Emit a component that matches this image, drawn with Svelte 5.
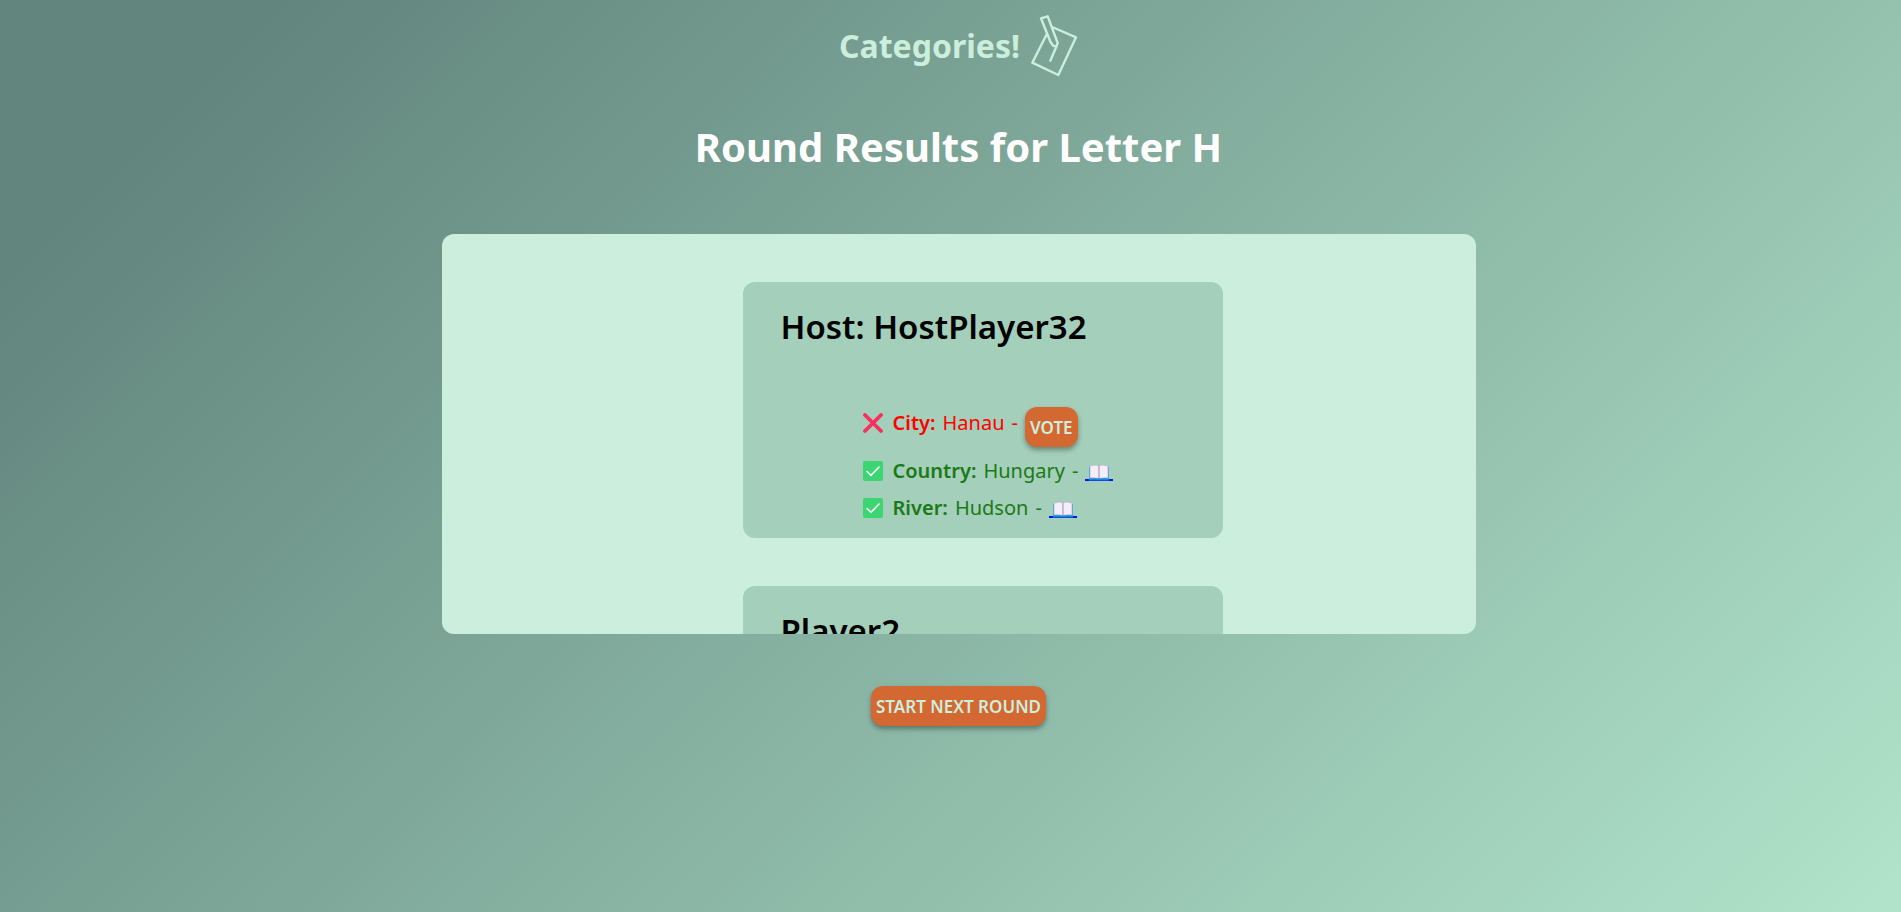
<script>
  const players = [
    {
      name: 'Host: HostPlayer32',
      answers: [
        { category: 'City', word: 'Hanau', valid: false },
        { category: 'Country', word: 'Hungary', valid: true },
        { category: 'River', word: 'Hudson', valid: true }
      ]
    },
    { name: 'Player2', answers: [] }
  ];
</script>

<div class="page">
  <header>
    <span class="brand">Categories!</span>
    <svg width="48" height="66" viewBox="0 0 48 66" fill="none" stroke="#cbeedd" stroke-width="2.4" stroke-linejoin="round" stroke-linecap="round" aria-hidden="true">
      <path d="M17 20.700 L2.300 49.700 L28.300 62 L46 24.300 L23.300 14.500" />
      <path d="M11 5.300 L17.700 3.300 L27.700 30 L26.300 33.700 L23 32.700 L20.300 28.500 Z" />
      <path d="M26.300 33.700 L20.300 47.700" />
    </svg>
  </header>

  <main>
    <h1>Round Results for Letter H</h1>

    <section class="results">
      {#each players as player}
        <article class="card">
          <h2>{player.name}</h2>
          <ul>
            {#each player.answers as answer}
              <li class:valid={answer.valid}>
                {#if answer.valid}
                  <svg class="mark" viewBox="0 0 20 20" role="img" aria-label="Valid">
                    <rect width="20" height="20" rx="2" fill="#3bd671" />
                    <path d="M4 10.500 L8 14.300 L16 6" fill="none" stroke="#fff" stroke-width="1.600" stroke-linecap="round" />
                  </svg>
                {:else}
                  <svg class="mark" viewBox="0 0 20 20" role="img" aria-label="Invalid">
                    <path d="M2 2 L18 18 M18 2 L2 18" fill="none" stroke="#f92f60" stroke-width="3.800" stroke-linecap="round" />
                  </svg>
                {/if}
                <span class="answer"><strong>{answer.category}:</strong> <span>{answer.word}</span> <span>-</span></span>
                {#if answer.valid}
                  <a href="#{answer.word}" aria-label="Read about {answer.word}">
                    <svg width="28" height="18" viewBox="0 0 28 18" aria-hidden="true">
                      <path d="M4 3 H24 V16 H4 Z" fill="#3fa9ea" />
                      <path d="M5 2 Q9.500 0.500 14 1.500 V14.500 Q9.500 13.500 5 14 Z" fill="#f3eef8" stroke="#b5a6c6" stroke-width="0.600" />
                      <path d="M23 2 Q18.500 0.500 14 1.500 V14.500 Q18.500 13.500 23 14 Z" fill="#f3eef8" stroke="#b5a6c6" stroke-width="0.600" />
                      <path d="M14 2 V14" stroke="#b5a6c6" stroke-width="1" />
                      <path d="M0 16 H28" stroke="#0018ee" stroke-width="2" />
                      <path d="M4 15.500 H24" stroke="#1686d9" stroke-width="2" />
                    </svg>
                  </a>
                {:else}
                  <button type="button">VOTE</button>
                {/if}
              </li>
            {/each}
          </ul>
        </article>
      {/each}
    </section>

    <button type="button">START NEXT ROUND</button>
  </main>
</div>

<style>
  :global(body) {
    margin: 0;
  }

  .page {
    box-sizing: border-box;
    min-height: 100vh;
    padding: 13px 16px 48px 32px;
    background: linear-gradient(135deg, #62857d 10%, #b1e4cb 100%);
    font-family: 'Noto Sans', sans-serif;
    font-size: 20px;
    line-height: 28px;
  }

  header {
    display: flex;
    align-items: center;
    justify-content: center;
    gap: 10px;
    color: #cbeedd;
  }

  .brand {
    font-size: 32px;
    line-height: 48px;
    font-weight: 700;
  }

  main {
    display: flex;
    flex-direction: column;
    align-items: center;
  }

  h1 {
    margin: 38px 0 57px;
    color: #fff;
    font-size: 40px;
    line-height: 60px;
    font-weight: 700;
  }

  .results {
    box-sizing: border-box;
    display: flex;
    flex-direction: column;
    align-items: center;
    gap: 48px;
    width: 100%;
    max-width: 1034px;
    height: 400px;
    margin-bottom: 52px;
    padding: 48px 0 48px 48px;
    overflow: auto;
    scrollbar-width: none;
    border-radius: 12px;
    background: #cbeedd;
  }

  .card {
    box-sizing: border-box;
    flex: none;
    width: 480px;
    max-width: 100%;
    min-height: 256px;
    padding: 21px 38px 16px;
    border-radius: 12px;
    background: #a4cfba;
  }

  h2 {
    margin: 0 0 56px;
    color: #000;
    font-size: 33px;
    line-height: 48px;
    font-weight: 600;
  }

  ul {
    display: flex;
    flex-direction: column;
    gap: 9px;
    margin: 0;
    padding: 0 0 0 82px;
    list-style: none;
  }

  li {
    display: flex;
    align-items: flex-start;
    padding-bottom: 1px;
    color: red;
  }

  li.valid {
    padding-bottom: 0;
    color: #1b7a16;
  }

  li:not(.valid) .answer,
  li:not(.valid) .mark {
    margin-top: 2px;
  }

  .mark {
    flex: none;
    width: 20px;
    height: 20px;
    margin-right: 10px;
  }

  li .mark {
    padding-top: 4px;
  }

  .answer {
    display: flex;
    gap: 7px;
    margin-right: 7px;
  }

  strong {
    font-weight: 600;
  }

  a {
    display: flex;
    padding-top: 7px;
  }

  button {
    height: 40px;
    padding: 0 5px;
    border: 0;
    border-radius: 12px;
    background: #d46832;
    box-shadow: 0 3px 5px rgba(0, 0, 0, 0.35);
    color: #cbeedd;
    font-family: 'Noto Sans', sans-serif;
    font-size: 17px;
    font-weight: 600;
    cursor: pointer;
  }
</style>
